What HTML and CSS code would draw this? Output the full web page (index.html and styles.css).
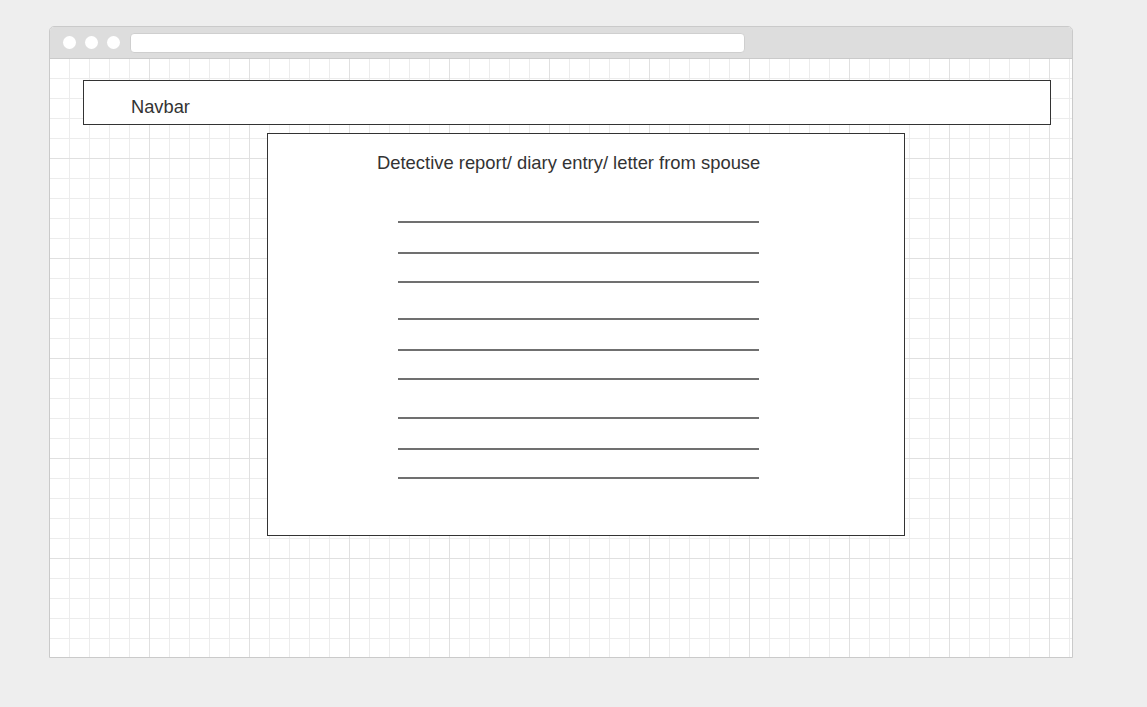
FILE: index.html
```html
<!DOCTYPE html>
<html lang="en">
<head>
<meta charset="utf-8">
<title>Wireframe</title>
<link rel="stylesheet" href="styles.css">
</head>
<body>
  <div class="window">
    <div class="titlebar">
      <span class="dot"></span>
      <span class="dot"></span>
      <span class="dot"></span>
      <span class="url"></span>
    </div>
    <div class="canvas">
      <div class="navbar">Navbar</div>
      <div class="panel">
        <div class="panel-title">Detective report/ diary entry/ letter from spouse</div>
        <div class="rules">
          <div class="group">
            <div class="rule"></div>
            <div class="rule r2"></div>
            <div class="rule r3"></div>
          </div>
          <div class="group g2">
            <div class="rule"></div>
            <div class="rule r2"></div>
            <div class="rule r3"></div>
          </div>
          <div class="group g3">
            <div class="rule"></div>
            <div class="rule r2"></div>
            <div class="rule r3"></div>
          </div>
        </div>
      </div>
    </div>
  </div>
</body>
</html>
```

FILE: styles.css
```css
* { box-sizing: border-box; }

html, body {
  margin: 0;
  padding: 0;
  background: #eeeeee;
  font-family: "Liberation Sans", Arial, Helvetica, sans-serif;
  color: #333333;
}

.window {
  margin: 26px 0 0 49px;
  width: 1024px;
  height: 632px;
  border: 1px solid #cacaca;
  border-radius: 5px 5px 0 0;
  background: #ffffff;
  display: flex;
  flex-direction: column;
  overflow: hidden;
}

.titlebar {
  height: 32px;
  flex: none;
  background: #dddddd;
  border-bottom: 1px solid #cacaca;
  display: flex;
  align-items: center;
  padding-left: 13px;
  gap: 9px;
}

.dot {
  width: 13px;
  height: 13px;
  border-radius: 50%;
  background: #ffffff;
  flex: none;
}

.url {
  margin-left: 1px;
  width: 615px;
  height: 20px;
  background: #ffffff;
  border: 1px solid #cfcfcf;
  border-radius: 4px;
}

.canvas {
  flex: 1;
  background-color: #ffffff;
  background-image:
    linear-gradient(to right, transparent 99px, #e0e0e0 99px),
    linear-gradient(to bottom, transparent 99px, #e0e0e0 99px),
    linear-gradient(to right, transparent 19px, #ececec 19px),
    linear-gradient(to bottom, transparent 19px, #ececec 19px);
  background-size: 100px 100px, 100px 100px, 20px 20px, 20px 20px;
  padding-top: 21px;
}

.navbar {
  margin-left: 33px;
  width: 968px;
  height: 45px;
  border: 1px solid #333333;
  background: #ffffff;
  padding: 16px 0 0 47px;
  font-size: 18.3px;
  line-height: 20px;
}

.panel {
  margin: 8px 0 0 217px;
  width: 638px;
  height: 403px;
  border: 1px solid #333333;
  background: #ffffff;
  padding: 19px 0 0 109px;
}

.panel-title {
  font-size: 18.4px;
  line-height: 20px;
  white-space: nowrap;
}

.rules {
  margin: 48px 0 0 21px;
}

.rule {
  width: 361px;
  height: 2px;
  background: #707070;
}

.rule.r2 { margin-top: 29px; }
.rule.r3 { margin-top: 27px; }
.group.g2 { margin-top: 35px; }
.group.g3 { margin-top: 37px; }
```
